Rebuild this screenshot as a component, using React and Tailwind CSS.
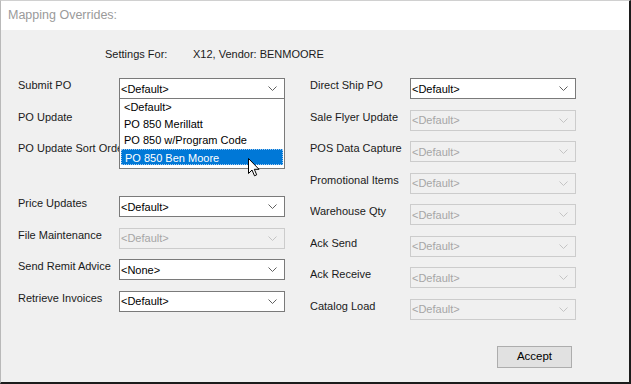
import React from 'react';

const Chevron = ({ disabled }) => (
  <svg width="9" height="5" viewBox="0 0 9 5" className="shrink-0">
    <path d="M0.5 0.5 L4.5 4.5 L8.5 0.5" fill="none" stroke={disabled ? '#c4c4c4' : '#606060'} strokeWidth="1" />
  </svg>
);

const Combo = ({ value = '<Default>', disabled = false }) => (
  <div
    className={`flex h-[21px] w-[166px] shrink-0 items-center justify-between border pl-[1px] pr-[7px] ${
      disabled ? 'border-[#cccccc] bg-[#f0f0f0] text-[#a6a6a6]' : 'border-[#7a7a7a] bg-white text-black'
    }`}
  >
    <span className="leading-[16px]">{value}</span>
    <Chevron disabled={disabled} />
  </div>
);

const Row = ({ label, labelWidth, children }) => (
  <div className="flex h-[21px] items-start">
    <div className={`${labelWidth} -mt-[1px] shrink-0 overflow-hidden whitespace-nowrap leading-[16px] text-[#1a1a1a]`}>
      {label}
    </div>
    {children}
  </div>
);

const Cursor = () => (
  <svg width="12" height="19" viewBox="0 0 12 19" className="absolute left-[128px] top-[59px]">
    <path d="M0.5 0.5 L0.5 15.5 L4 12 L6.5 17.8 L8.7 16.8 L6.3 11.3 L11 11.3 Z" fill="white" stroke="black" strokeWidth="1" strokeLinejoin="round" />
  </svg>
);

const App = () => {
  const rightRows = [
    { label: 'Direct Ship PO', disabled: false },
    { label: 'Sale Flyer Update', disabled: true },
    { label: 'POS Data Capture', disabled: true },
    { label: 'Promotional Items', disabled: true },
    { label: 'Warehouse Qty', disabled: true },
    { label: 'Ack Send', disabled: true },
    { label: 'Ack Receive', disabled: true },
    { label: 'Catalog Load', disabled: true },
  ];

  const items = ['<Default>', 'PO 850 Merillatt', 'PO 850 w/Program Code', 'PO 850 Ben Moore'];

  return (
    <div
      className="flex h-[384px] w-[631px] flex-col border-l border-t border-l-[#b9b9b9] border-t-[#d0d0d0] border-r-2 border-b-2 border-r-[#1c1c1c] border-b-[#1c1c1c] bg-[#f0f0f0] text-[11px]"
      style={{ fontFamily: '"Liberation Sans", Arial, sans-serif' }}
    >
      {/* Title bar */}
      <div className="flex h-[29px] items-center bg-white pl-[7px] text-[12.5px] text-[#9a9a9a]">
        Mapping Overrides:
      </div>

      {/* Body */}
      <div className="flex flex-1 flex-col pl-[17px] pt-[16px]">
        <div className="flex h-[16px] items-center leading-[16px] text-[#1a1a1a]">
          <span className="ml-[87px] w-[88px]">Settings For:</span>
          <span>X12, Vendor: BENMOORE</span>
        </div>

        <div className="mt-[16px] flex">
          {/* Left column */}
          <div className="flex w-[292px] flex-col gap-[10.5px]">
            <div className="relative">
              <Row label="Submit PO" labelWidth="w-[101px]">
                <Combo />
              </Row>
              {/* Open dropdown list */}
              <div className="absolute left-[101px] top-[20px] z-10 flex w-[166px] flex-col border border-[#7a7a7a] bg-white px-[1px] pb-[3px] text-black">
                {items.map((it, i) => (
                  <div
                    key={it}
                    className={`h-[16.5px] pl-[3px] leading-[16px] ${
                      i === 3 ? 'border border-dotted border-[#9ec7ef] bg-[#0078d7] pl-[2px] text-white' : ''
                    }`}
                  >
                    {it}
                  </div>
                ))}
                <Cursor />
              </div>
            </div>
            <Row label="PO Update" labelWidth="w-[101px]">
              <Combo />
            </Row>
            <Row label="PO Update Sort Order" labelWidth="w-[101px]">
              <Combo />
            </Row>
            <div className="h-[13px]" />
            <Row label="Price Updates" labelWidth="w-[101px]">
              <Combo />
            </Row>
            <Row label="File Maintenance" labelWidth="w-[101px]">
              <Combo disabled />
            </Row>
            <Row label="Send Remit Advice" labelWidth="w-[101px]">
              <Combo value="<None>" />
            </Row>
            <Row label="Retrieve Invoices" labelWidth="w-[101px]">
              <Combo />
            </Row>
          </div>

          {/* Right column */}
          <div className="flex flex-col gap-[10.5px]">
            {rightRows.map((r) => (
              <Row key={r.label} label={r.label} labelWidth="w-[100px]">
                <Combo disabled={r.disabled} />
              </Row>
            ))}
          </div>
        </div>

        <div className="mt-[26px] flex justify-end pr-[57px]">
          <button
            type="button"
            className="h-[22px] w-[75px] border border-[#adadad] bg-[#e1e1e1] text-[11.5px] text-black"
          >
            Accept
          </button>
        </div>
      </div>
    </div>
  );
};

export default App;
